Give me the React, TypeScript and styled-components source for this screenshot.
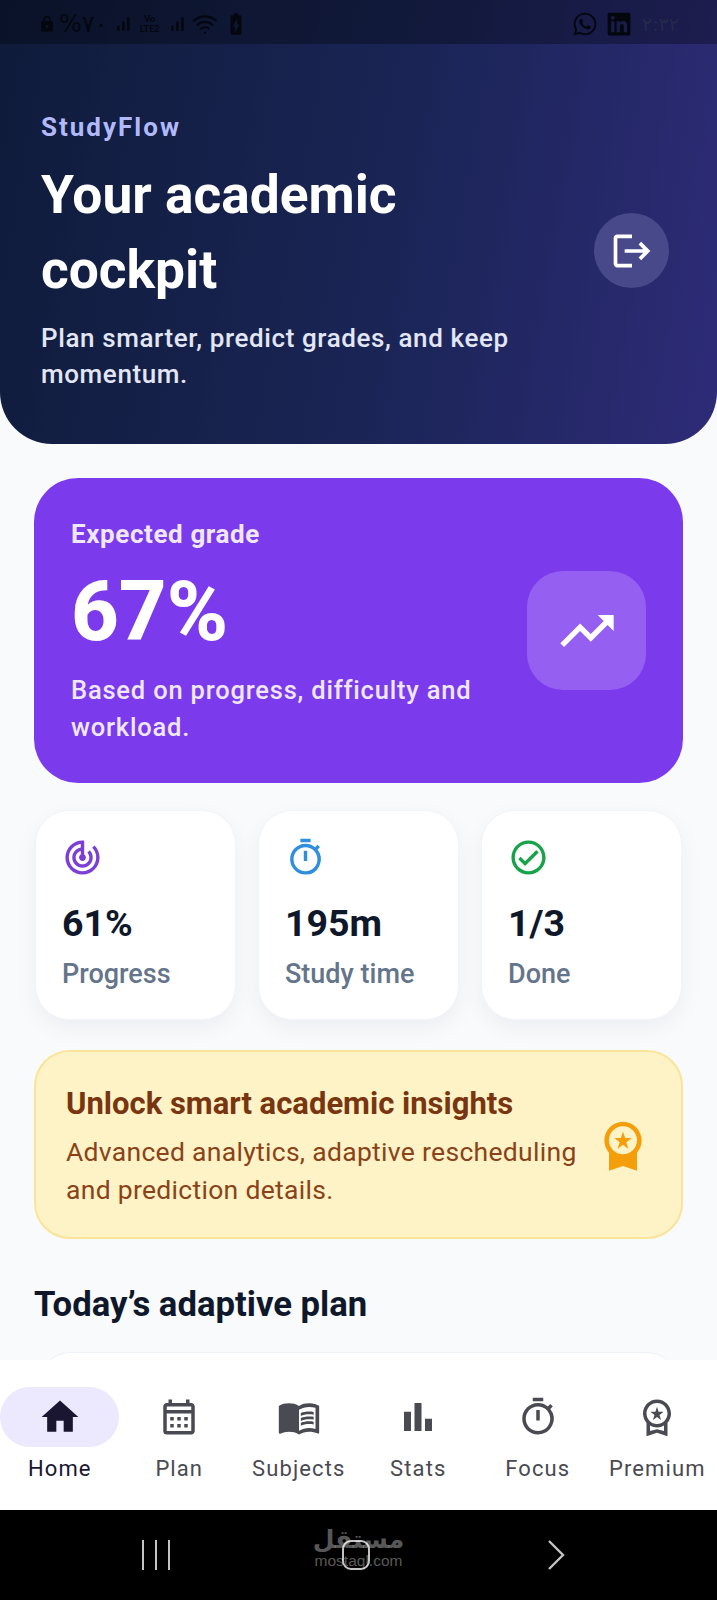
import { ReactNode } from "react";
import styled, { createGlobalStyle } from "styled-components";
import { FaLinkedin, FaWhatsapp } from "react-icons/fa";
import { LuWifi } from "react-icons/lu";
import {
  MdBarChart,
  MdBatteryChargingFull,
  MdHome,
  MdLock,
  MdLogout,
  MdMenuBook,
  MdOutlineCalendarMonth,
  MdOutlineCheckCircle,
  MdOutlineTimer,
  MdOutlineWorkspacePremium,
  MdSignalCellularAlt,
  MdTrackChanges,
  MdTrendingUp,
  MdWorkspacePremium,
} from "react-icons/md";

const GlobalStyle = createGlobalStyle`
  html, body {
    margin: 0;
    padding: 0;
    background: #f8fafc;
    font-family: Roboto, "Liberation Sans", sans-serif;
  }
  * {
    box-sizing: border-box;
  }
`;

const Screen = styled.div`
  position: relative;
  width: 717px;
  height: 1600px;
  overflow: hidden;
  display: flex;
  flex-direction: column;
  background: #f8fafc;
`;

const Hero = styled.header`
  height: 444px;
  flex-shrink: 0;
  border-radius: 0 0 52px 52px;
  background: linear-gradient(100deg, #0f1b3a 0%, #1a2556 55%, #2e2b78 100%);
  color: #fff;
  display: flex;
  flex-direction: column;
`;

const StatusBar = styled.div`
  height: 44px;
  padding: 4px 38px 0 38px;
  background: rgba(0, 0, 0, 0.3);
  color: #05070f;
  display: flex;
  align-items: center;
  justify-content: space-between;
`;

const StatusGroup = styled.div<{ $gap: number }>`
  display: flex;
  align-items: center;
  gap: ${(p) => p.$gap}px;
`;

const StatusClock = styled.span`
  font-size: 19px;
  margin-left: 2px;
  color: #232a4a;
  font-family: "DejaVu Sans", sans-serif;
`;

const StatusPercent = styled.span`
  font-size: 24px;
  line-height: 1;
  margin-left: -2px;
  font-family: "DejaVu Sans", sans-serif;
`;

const VolteTag = styled.span`
  width: 24px;
  font-size: 9px;
  font-weight: 700;
  line-height: 10px;
  text-align: center;
`;

const HeroBody = styled.div`
  flex: 1;
  padding: 71px 48px 0 41px;
  display: flex;
  align-items: center;
  justify-content: space-between;
`;

const HeroCopy = styled.div`
  width: 490px;
  align-self: flex-start;
`;

const Brand = styled.div`
  font-size: 26px;
  font-weight: 700;
  line-height: 24px;
  letter-spacing: 2px;
  color: #b1b9fb;
`;

const HeroTitle = styled.h1`
  margin: 19px 0 0;
  font-size: 53.3px;
  font-weight: 700;
  line-height: 75px;
  color: #fff;
`;

const HeroText = styled.p`
  margin: 12px 0 0;
  font-size: 26px;
  font-weight: 500;
  line-height: 36px;
  letter-spacing: 0.6px;
  color: #e2e6f5;
`;

const LogoutButton = styled.div`
  width: 75px;
  height: 75px;
  margin-top: -58px;
  border-radius: 50%;
  background: #48498a;
  color: #fff;
  display: flex;
  align-items: center;
  justify-content: center;
`;

const Content = styled.main`
  flex: 1;
  min-height: 0;
  overflow: hidden;
  padding: 34px 34px 0;
  display: flex;
  flex-direction: column;
`;

const GradeCard = styled.section`
  height: 305px;
  flex-shrink: 0;
  border-radius: 44px;
  background: #7c3aed;
  padding: 4px 37px 0 37px;
  color: #fff;
  display: flex;
  align-items: center;
  justify-content: space-between;
`;

const GradeCopy = styled.div`
  width: 430px;
`;

const GradeLabel = styled.div`
  font-size: 26px;
  font-weight: 700;
  line-height: 30px;
  letter-spacing: 0.6px;
  color: #efe8fd;
`;

const GradeValue = styled.div`
  margin-top: 21px;
  font-size: 83px;
  font-weight: 800;
  line-height: 84px;
`;

const GradeText = styled.p`
  margin: 18px 0 0;
  font-size: 25.5px;
  font-weight: 500;
  line-height: 37px;
  letter-spacing: 0.8px;
  color: #efe8fd;
`;

const GradeBadge = styled.div`
  width: 119px;
  height: 119px;
  margin-top: -4px;
  border-radius: 36px;
  background: #955ff1;
  display: flex;
  align-items: center;
  justify-content: center;
`;

const StatsRow = styled.section`
  margin-top: 27px;
  padding: 0 1px;
  display: grid;
  grid-template-columns: repeat(3, 1fr);
  gap: 22px;
  flex-shrink: 0;
`;

const StatCard = styled.div`
  height: 210px;
  border-radius: 34px;
  background: #fff;
  border: 1px solid #f1f4f9;
  box-shadow: 0 8px 22px rgba(15, 23, 42, 0.05);
  padding: 26px 26px 0;
  display: flex;
  flex-direction: column;
`;

const StatIcon = styled.div<{ $color: string }>`
  height: 40px;
  color: ${(p) => p.$color};
  display: flex;
  align-items: center;
`;

const StatValue = styled.div`
  margin-top: 26px;
  font-size: 37.5px;
  font-weight: 700;
  line-height: 40px;
  color: #0f172a;
`;

const StatLabel = styled.div`
  margin-top: 15px;
  font-size: 27px;
  font-weight: 500;
  line-height: 32px;
  color: #64748b;
`;

const InsightCard = styled.section`
  height: 189px;
  margin-top: 30px;
  flex-shrink: 0;
  border-radius: 36px;
  background: #fef3c7;
  border: 2px solid #f9e498;
  padding: 6px 30px 0 30px;
  display: flex;
  align-items: center;
  justify-content: space-between;
`;

const InsightCopy = styled.div`
  width: 530px;
`;

const InsightTitle = styled.h2`
  margin: 0;
  font-size: 31px;
  font-weight: 700;
  line-height: 36px;
  color: #78350f;
`;

const InsightText = styled.p`
  margin: 11px 0 0;
  font-size: 26.5px;
  line-height: 38px;
  letter-spacing: 0.3px;
  color: #8a4318;
`;

const InsightIcon = styled.div`
  margin-top: -6px;
  color: #f59e0b;
  display: flex;
`;

const SectionTitle = styled.h2`
  margin: 45px 0 0;
  font-size: 34.7px;
  font-weight: 700;
  line-height: 40px;
  color: #0f172a;
  flex-shrink: 0;
`;

const PlanCardTop = styled.div`
  height: 60px;
  margin: 28px 3px 0;
  flex-shrink: 0;
  border-radius: 34px 34px 0 0;
  background: #fff;
  border: 1px solid #eef1f7;
`;

const BottomNav = styled.nav`
  height: 150px;
  flex-shrink: 0;
  background: #fff;
  display: grid;
  grid-template-columns: repeat(6, 1fr);
  position: relative;
`;

const NavItem = styled.div<{ $active?: boolean }>`
  padding-top: 27px;
  display: flex;
  flex-direction: column;
  align-items: center;
  color: ${(p) => (p.$active ? "#1a1631" : "#4a4a52")};
`;

const NavIconWrap = styled.div<{ $active?: boolean }>`
  width: 119px;
  height: 60px;
  border-radius: 30px;
  background: ${(p) => (p.$active ? "#ece8fd" : "transparent")};
  display: flex;
  align-items: center;
  justify-content: center;
`;

const NavLabel = styled.div`
  margin-top: 8px;
  font-size: 22px;
  font-weight: 400;
  line-height: 28px;
  letter-spacing: 1.1px;
  white-space: nowrap;
`;

const SystemBar = styled.div`
  height: 90px;
  flex-shrink: 0;
  background: #000;
  display: grid;
  grid-template-columns: repeat(3, 1fr);
  align-items: center;
  justify-items: center;
  padding: 0 60px 0 56px;
`;

const RecentsIcon = styled.div`
  width: 28px;
  height: 30px;
  border-left: 2px solid #c4c4c4;
  border-right: 2px solid #c4c4c4;
  display: flex;
  justify-content: center;

  &::before {
    content: "";
    width: 2px;
    height: 100%;
    background: #c4c4c4;
  }
`;

const HomeKey = styled.div`
  width: 28px;
  height: 30px;
  border: 2px solid #c4c4c4;
  border-radius: 9px;
`;

const Watermark = styled.div`
  position: absolute;
  left: 0;
  right: 0;
  bottom: 31px;
  text-align: center;
  color: rgba(255, 255, 255, 0.36);
  pointer-events: none;
`;

const WatermarkArabic = styled.div`
  font-family: "DejaVu Sans", sans-serif;
  font-size: 25px;
  font-weight: 700;
  line-height: 26px;
`;

const WatermarkLatin = styled.div`
  font-family: "Liberation Sans", sans-serif;
  font-size: 15.5px;
  line-height: 16px;
`;

const navItems: { label: string; icon: ReactNode; active?: boolean }[] = [
  { label: "Home", icon: <MdHome size={44} />, active: true },
  { label: "Plan", icon: <MdOutlineCalendarMonth size={42} /> },
  { label: "Subjects", icon: <MdMenuBook size={44} /> },
  { label: "Stats", icon: <MdBarChart size={42} /> },
  { label: "Focus", icon: <MdOutlineTimer size={42} /> },
  { label: "Premium", icon: <MdOutlineWorkspacePremium size={42} /> },
];

const stats = [
  { value: "61%", label: "Progress", color: "#7c3fd6", icon: <MdTrackChanges size={41} /> },
  { value: "195m", label: "Study time", color: "#2f8fdc", icon: <MdOutlineTimer size={41} /> },
  { value: "1/3", label: "Done", color: "#16a34a", icon: <MdOutlineCheckCircle size={41} /> },
];

export default function App() {
  return (
    <Screen>
      <GlobalStyle />
      <Hero>
        <StatusBar>
          <StatusGroup $gap={5}>
            <MdLock size={18} />
            <StatusPercent>%٧٠</StatusPercent>
            <MdSignalCellularAlt size={20} />
            <VolteTag>
              Vo
              <br />
              LTE2
            </VolteTag>
            <MdSignalCellularAlt size={20} />
            <LuWifi size={26} />
            <MdBatteryChargingFull size={26} />
          </StatusGroup>
          <StatusGroup $gap={8}>
            <FaWhatsapp size={26} />
            <FaLinkedin size={26} />
            <StatusClock>٢:٣٢</StatusClock>
          </StatusGroup>
        </StatusBar>
        <HeroBody>
          <HeroCopy>
            <Brand>StudyFlow</Brand>
            <HeroTitle>
              Your academic
              <br />
              cockpit
            </HeroTitle>
            <HeroText>Plan smarter, predict grades, and keep momentum.</HeroText>
          </HeroCopy>
          <LogoutButton>
            <MdLogout size={44} />
          </LogoutButton>
        </HeroBody>
      </Hero>

      <Content>
        <GradeCard>
          <GradeCopy>
            <GradeLabel>Expected grade</GradeLabel>
            <GradeValue>67%</GradeValue>
            <GradeText>Based on progress, difficulty and workload.</GradeText>
          </GradeCopy>
          <GradeBadge>
            <MdTrendingUp size={64} color="#fff" />
          </GradeBadge>
        </GradeCard>

        <StatsRow>
          {stats.map((s) => (
            <StatCard key={s.label}>
              <StatIcon $color={s.color}>{s.icon}</StatIcon>
              <StatValue>{s.value}</StatValue>
              <StatLabel>{s.label}</StatLabel>
            </StatCard>
          ))}
        </StatsRow>

        <InsightCard>
          <InsightCopy>
            <InsightTitle>Unlock smart academic insights</InsightTitle>
            <InsightText>Advanced analytics, adaptive rescheduling and prediction details.</InsightText>
          </InsightCopy>
          <InsightIcon>
            <MdWorkspacePremium size={56} />
          </InsightIcon>
        </InsightCard>

        <SectionTitle>Today’s adaptive plan</SectionTitle>
        <PlanCardTop />
      </Content>

      <BottomNav>
        {navItems.map((item) => (
          <NavItem key={item.label} $active={item.active}>
            <NavIconWrap $active={item.active}>{item.icon}</NavIconWrap>
            <NavLabel>{item.label}</NavLabel>
          </NavItem>
        ))}
      </BottomNav>

      <SystemBar>
        <RecentsIcon />
        <HomeKey />
        <svg width="24" height="34" viewBox="0 0 24 34" fill="none">
          <path d="M4 3 L18 17 L4 31" stroke="#c4c4c4" strokeWidth="2.4" />
        </svg>
      </SystemBar>

      <Watermark>
        <WatermarkArabic>مستقل</WatermarkArabic>
        <WatermarkLatin>mostaql.com</WatermarkLatin>
      </Watermark>
    </Screen>
  );
}
